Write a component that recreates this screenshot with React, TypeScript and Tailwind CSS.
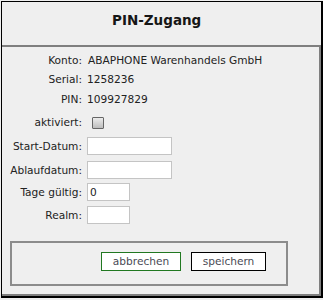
import React from "react";

const font = { fontFamily: '"DejaVu Sans", Verdana, sans-serif' };

function Row({ label, children, className = "" }: { label: string; children?: React.ReactNode; className?: string }) {
  return (
    <div className={"flex items-center " + className}>
      <div className="w-[80px] text-right text-[#222]">{label}</div>
      <div className="ml-[5px] flex items-center">{children}</div>
    </div>
  );
}

export default function App() {
  return (
    <div className="w-[323px] h-[300px] bg-[#efefef] pt-[1px] pl-[1px] text-[10.6px] leading-none" style={font}>
      <div className="w-[322px] h-[297px] border-t border-l border-r-2 border-b-2 border-black flex flex-col">
        <div className="h-[43px] pl-[110px] pt-[12px] font-bold text-[13.5px] text-[#161616]">PIN-Zugang</div>
        <div className="h-[251px] border-t-2 border-r-2 border-b-2 border-[#7f7f7f] pt-[3px] flex flex-col">
          <Row label="Konto:" className="h-[20px]">
            <span className="text-[#222] pl-[1px]">ABAPHONE Warenhandels GmbH</span>
          </Row>
          <Row label="Serial:" className="h-[19px]">
            <span className="text-[#222]">1258236</span>
          </Row>
          <Row label="PIN:" className="h-[20px]">
            <span className="text-[#222]">109927829</span>
          </Row>
          <Row label="aktiviert:" className="h-[27px]">
            <div className="ml-[5px] w-[12px] h-[12px] border border-[#666] rounded-[1px] bg-gradient-to-b from-[#ececec] to-[#bdbdbd]" />
          </Row>
          <Row label="Start-Datum:" className="h-[20px]">
            <div className="w-[85px] h-[18px] border border-[#c4c4c4] bg-white" />
          </Row>
          <Row label="Ablaufdatum:" className="h-[20px] mt-[4px]">
            <div className="w-[85px] h-[18px] border border-[#c4c4c4] bg-white" />
          </Row>
          <Row label="Tage gültig:" className="h-[20px] mt-[2px]">
            <div className="w-[43px] h-[18px] border border-[#c4c4c4] bg-white flex items-center pl-[2px] text-[#222]">0</div>
          </Row>
          <Row label="Realm:" className="h-[20px] mt-[3px]">
            <div className="w-[43px] h-[18px] border border-[#c4c4c4] bg-white" />
          </Row>
          <div className="ml-[8px] mt-[16px] w-[278px] h-[45px] border-2 border-[#8c8c8c] pl-[89px] pt-[9px] flex gap-[10px] items-start">
            <div className="w-[80px] h-[19px] border border-[#217821] bg-white flex items-center justify-center text-[#4a4a55]">abbrechen</div>
            <div className="w-[75px] h-[19px] border border-black bg-white flex items-center justify-center text-[#4a4a55]">speichern</div>
          </div>
        </div>
      </div>
    </div>
  );
}
